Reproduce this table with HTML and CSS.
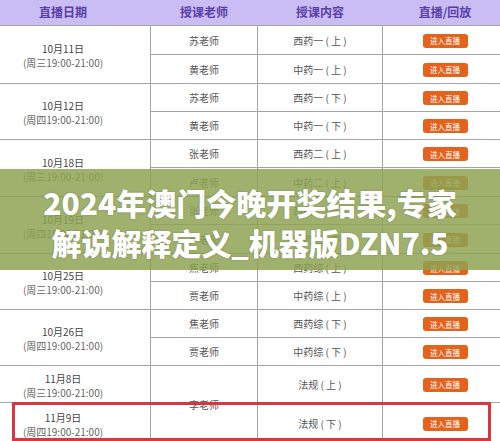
FILE: index.html
```html
<!DOCTYPE html>
<html lang="zh">
<head>
<meta charset="utf-8">
<title>直播课表</title>
<link rel="stylesheet" href="styles.css">
</head>
<body>
<div class="page">
  <div class="table">
    <div class="head">
      <div class="hcell">直播日期</div>
      <div class="hcell">授课老师</div>
      <div class="hcell">授课内容</div>
      <div class="hcell">直播/回放</div>
    </div>
    <div class="grid">
      <div class="cell date span2"><span>10月11日</span><span class="time">(周三19:00-21:00)</span></div>
      <div class="cell">苏老师</div><div class="cell">西药一 ( 上 )</div><div class="cell"><span class="btn">进入直播</span></div>
      <div class="cell">黄老师</div><div class="cell">中药一 ( 上 )</div><div class="cell"><span class="btn">进入直播</span></div>

      <div class="cell date span2"><span>10月12日</span><span class="time">(周四19:00-21:00)</span></div>
      <div class="cell">苏老师</div><div class="cell">西药一 ( 下 )</div><div class="cell"><span class="btn">进入直播</span></div>
      <div class="cell">黄老师</div><div class="cell">中药一 ( 下 )</div><div class="cell"><span class="btn">进入直播</span></div>

      <div class="cell date span2"><span>10月18日</span><span class="time">(周三19:00-21:00)</span></div>
      <div class="cell">张老师</div><div class="cell">西药二 ( 上 )</div><div class="cell"><span class="btn">进入直播</span></div>
      <div class="cell">卢老师</div><div class="cell">中药二 ( 上 )</div><div class="cell"><span class="btn">进入直播</span></div>

      <div class="cell date span2"><span>10月19日</span><span class="time">(周四19:00-21:00)</span></div>
      <div class="cell">张老师</div><div class="cell">西药二 ( 下 )</div><div class="cell"><span class="btn">进入直播</span></div>
      <div class="cell">卢老师</div><div class="cell">中药二 ( 下 )</div><div class="cell"><span class="btn">进入直播</span></div>

      <div class="cell date span2"><span>10月25日</span><span class="time">(周三19:00-21:00)</span></div>
      <div class="cell">焦老师</div><div class="cell">西药综 ( 上 )</div><div class="cell"><span class="btn">进入直播</span></div>
      <div class="cell">贾老师</div><div class="cell">中药综 ( 上 )</div><div class="cell"><span class="btn">进入直播</span></div>

      <div class="cell date span2"><span>10月26日</span><span class="time">(周四19:00-21:00)</span></div>
      <div class="cell">焦老师</div><div class="cell">西药综 ( 下 )</div><div class="cell"><span class="btn">进入直播</span></div>
      <div class="cell">贾老师</div><div class="cell">中药综 ( 下 )</div><div class="cell"><span class="btn">进入直播</span></div>

      <div class="cell date"><span>11月8日</span><span class="time">(周三19:00-21:00)</span></div>
      <div class="cell span2">李老师</div><div class="cell">法规 ( 上 )</div><div class="cell"><span class="btn">进入直播</span></div>
      <div class="cell date"><span>11月9日</span><span class="time">(周四19:00-21:00)</span></div>
      <div class="cell">法规 ( 下 )</div><div class="cell"><span class="btn">进入直播</span></div>
    </div>
  </div>
  <div class="band">2024年澳门今晚开奖结果,专家<br>解说解释定义_机器版DZN7.5</div>
  <div class="mark"></div>
</div>
</body>
</html>
```

FILE: styles.css
```css
html, body {
  margin: 0;
  padding: 0;
  background: #ffffff;
}
.page {
  position: relative;
  width: 500px;
  height: 441px;
  overflow: hidden;
  font-family: "Noto Sans CJK SC", "Noto Sans", sans-serif;
}
.table {
  margin-left: -24px;
  width: 531px;
}
.head {
  display: grid;
  grid-template-columns: 174px 106px 124px 124px;
  column-gap: 1px;
  height: 25px;
  background: #c9bdf3;
}
.hcell {
  display: flex;
  align-items: center;
  justify-content: center;
  font-size: 12px;
  font-weight: 700;
  color: #5a3da6;
  padding-bottom: 2px;
}
.grid {
  display: grid;
  grid-template-columns: 174px 106px 124px 124px;
  grid-template-rows: 28px 28px 27px 27px 27px 28px 27px 28px 27px 27px 27px 27px 36px 40px;
  gap: 1px;
  padding-top: 1px;
  background: #a4a4a4;
}
.cell {
  background: #ffffff;
  display: flex;
  align-items: center;
  justify-content: center;
  font-size: 10px;
  color: #555555;
}
.span2 {
  grid-row: span 2;
}
.date {
  flex-direction: column;
  line-height: 14px;
  color: #444444;
  padding-top: 3px;
}
.time {
  color: #666666;
}
.btn {
  display: inline-flex;
  align-items: center;
  justify-content: center;
  width: 45px;
  height: 14px;
  border-radius: 3px;
  background: #e4621c;
  color: #ffffff;
  font-size: 7.5px;
  margin-top: 1px;
}
.band {
  position: absolute;
  left: 0;
  top: 169px;
  width: 500px;
  height: 101px;
  box-sizing: border-box;
  padding-top: 13px;
  background: rgba(142, 162, 82, 0.84);
  color: #ffffff;
  font-size: 30px;
  font-weight: 900;
  line-height: 40px;
  text-align: center;
  white-space: nowrap;
  text-shadow: 0 0 2px rgba(0, 0, 0, 0.25);
}
.mark {
  position: absolute;
  left: 12px;
  top: 402px;
  width: 479px;
  height: 39px;
  box-sizing: border-box;
  border: 3px solid #d9363e;
}
```
